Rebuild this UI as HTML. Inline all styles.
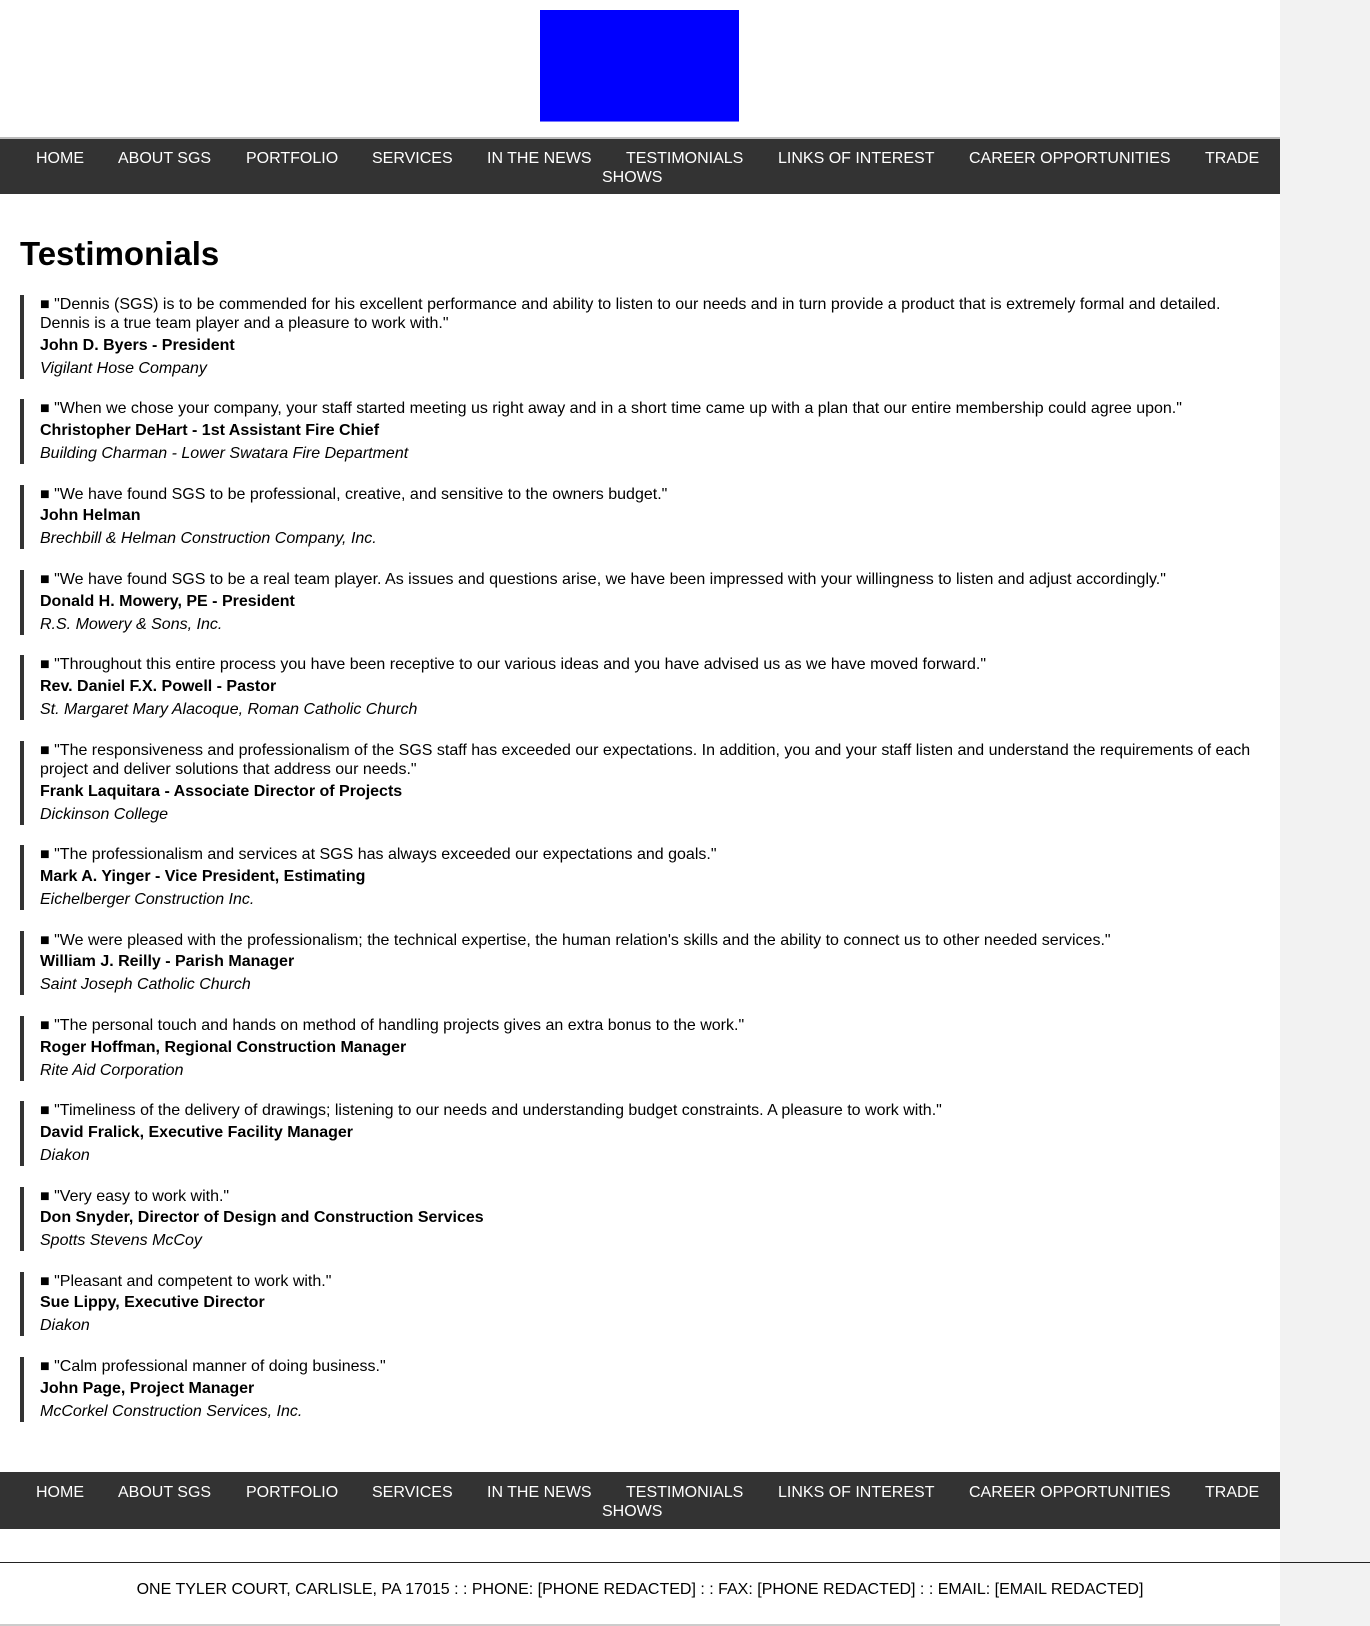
<!DOCTYPE html>
<html><head><meta charset="utf-8"><style>
html,body{margin:0;padding:0}
body{width:1370px;height:1626px;position:relative;background:#f2f2f2;font-family:"Liberation Sans",Arial,sans-serif;color:#000;overflow:hidden}
.page{position:absolute;left:0;top:0;width:1280px;height:1626px;background:#fff}
.logo{position:absolute;left:540px;top:10px;width:199px;height:111px;background:#00f;border-bottom:1px solid #77f}
.nav{position:absolute;left:0;width:1280px;height:57px;background:#333;border-top:2px solid #bbb;box-sizing:border-box;color:#fff;font-size:16px}
.nav span{position:absolute;top:11px;line-height:18px;white-space:nowrap}
h1{position:absolute;left:20px;top:234px;margin:0;font-size:33px;line-height:40px;font-weight:bold}
.list{position:absolute;left:20px;top:294.5px;width:1240px}
.t{border-left:4px solid #333;padding-left:16px;margin-bottom:20.7px;font-size:16px}
.q{line-height:19.6px}
.n{font-weight:bold;line-height:20px;margin-top:2px}
.c{font-style:italic;line-height:20px;margin-top:3px}
.fline{position:absolute;left:0;top:1562px;width:1370px;height:1px;background:#222}
.addr{position:absolute;left:0;top:1580px;width:1280px;text-align:center;font-size:16px;line-height:20px}
.bline{position:absolute;left:0;top:1624px;width:1280px;height:2px;background:#ccc}
</style></head><body>
<div class="page">
<div class="logo"></div>
<div class="nav" style="top:137px">
<span style="left:36px">HOME</span><span style="left:118px">ABOUT SGS</span><span style="left:246px">PORTFOLIO</span><span style="left:372px">SERVICES</span><span style="left:487px">IN THE NEWS</span><span style="left:626px">TESTIMONIALS</span><span style="left:778px">LINKS OF INTEREST</span><span style="left:969px">CAREER OPPORTUNITIES</span><span style="left:1205px">TRADE</span><span style="left:602px;top:30px">SHOWS</span>
</div>
<h1>Testimonials</h1>
<div class="list">
<div class="t"><div class="q">■ "Dennis (SGS) is to be commended for his excellent performance and ability to listen to our needs and in turn provide a product that is extremely formal and detailed. Dennis is a true team player and a pleasure to work with."</div><div class="n">John D. Byers - President</div><div class="c">Vigilant Hose Company</div></div>
<div class="t"><div class="q">■ "When we chose your company, your staff started meeting us right away and in a short time came up with a plan that our entire membership could agree upon."</div><div class="n">Christopher DeHart - 1st Assistant Fire Chief</div><div class="c">Building Charman - Lower Swatara Fire Department</div></div>
<div class="t"><div class="q">■ "We have found SGS to be professional, creative, and sensitive to the owners budget."</div><div class="n">John Helman</div><div class="c">Brechbill &amp; Helman Construction Company, Inc.</div></div>
<div class="t"><div class="q">■ "We have found SGS to be a real team player. As issues and questions arise, we have been impressed with your willingness to listen and adjust accordingly."</div><div class="n">Donald H. Mowery, PE - President</div><div class="c">R.S. Mowery &amp; Sons, Inc.</div></div>
<div class="t"><div class="q">■ "Throughout this entire process you have been receptive to our various ideas and you have advised us as we have moved forward."</div><div class="n">Rev. Daniel F.X. Powell - Pastor</div><div class="c">St. Margaret Mary Alacoque, Roman Catholic Church</div></div>
<div class="t"><div class="q">■ "The responsiveness and professionalism of the SGS staff has exceeded our expectations. In addition, you and your staff listen and understand the requirements of each project and deliver solutions that address our needs."</div><div class="n">Frank Laquitara - Associate Director of Projects</div><div class="c">Dickinson College</div></div>
<div class="t"><div class="q">■ "The professionalism and services at SGS has always exceeded our expectations and goals."</div><div class="n">Mark A. Yinger - Vice President, Estimating</div><div class="c">Eichelberger Construction Inc.</div></div>
<div class="t"><div class="q">■ "We were pleased with the professionalism; the technical expertise, the human relation's skills and the ability to connect us to other needed services."</div><div class="n">William J. Reilly - Parish Manager</div><div class="c">Saint Joseph Catholic Church</div></div>
<div class="t"><div class="q">■ "The personal touch and hands on method of handling projects gives an extra bonus to the work."</div><div class="n">Roger Hoffman, Regional Construction Manager</div><div class="c">Rite Aid Corporation</div></div>
<div class="t"><div class="q">■ "Timeliness of the delivery of drawings; listening to our needs and understanding budget constraints. A pleasure to work with."</div><div class="n">David Fralick, Executive Facility Manager</div><div class="c">Diakon</div></div>
<div class="t"><div class="q">■ "Very easy to work with."</div><div class="n">Don Snyder, Director of Design and Construction Services</div><div class="c">Spotts Stevens McCoy</div></div>
<div class="t"><div class="q">■ "Pleasant and competent to work with."</div><div class="n">Sue Lippy, Executive Director</div><div class="c">Diakon</div></div>
<div class="t"><div class="q">■ "Calm professional manner of doing business."</div><div class="n">John Page, Project Manager</div><div class="c">McCorkel Construction Services, Inc.</div></div>
</div>
<div class="nav" style="top:1472px;border-top:0">
<span style="left:36px;top:12px">HOME</span><span style="left:118px;top:12px">ABOUT SGS</span><span style="left:246px;top:12px">PORTFOLIO</span><span style="left:372px;top:12px">SERVICES</span><span style="left:487px;top:12px">IN THE NEWS</span><span style="left:626px;top:12px">TESTIMONIALS</span><span style="left:778px;top:12px">LINKS OF INTEREST</span><span style="left:969px;top:12px">CAREER OPPORTUNITIES</span><span style="left:1205px;top:12px">TRADE</span><span style="left:602px;top:31px">SHOWS</span>
</div>
<div class="addr">ONE TYLER COURT, CARLISLE, PA 17015 : : PHONE: [PHONE REDACTED] : : FAX: [PHONE REDACTED] : : EMAIL: [EMAIL REDACTED]</div>
<div class="bline"></div>
</div>
<div class="fline"></div>
</body></html>
